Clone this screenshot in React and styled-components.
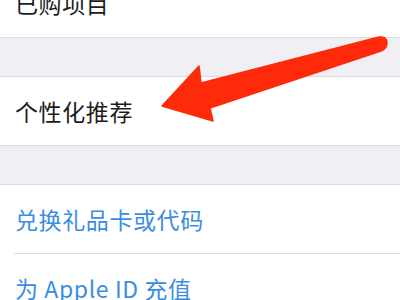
import React from "react";
import styled, { createGlobalStyle } from "styled-components";

const Global = createGlobalStyle`
  html, body { margin: 0; padding: 0; background: #efeff4; }
  body { width: 400px; height: 300px; overflow: hidden; }
`;

const Screen = styled.div`
  position: relative;
  width: 400px;
  height: 300px;
  overflow: hidden;
  background: #efeff4;
  font-family: "Noto Sans CJK SC", "Noto Sans", sans-serif;
`;

const List = styled.div`
  display: flex;
  flex-direction: column;
  margin-top: -31px;
`;

const Group = styled.div`
  background: #ffffff;
  border-top: 1px solid #dcdce1;
  border-bottom: 1px solid #dcdce1;
  &:first-child { border-top: none; }
`;

const Gap = styled.div`
  height: 38px;
`;

const Row = styled.div`
  height: 68px;
  display: flex;
  align-items: center;
  padding-left: 15px;
  font-size: 23px;
  letter-spacing: 0.6px;
  color: ${(p) => (p.$link ? "#3a8de2" : "#1c1c1c")};
  & + & {
    border-top: 1px solid #dcdce1;
    margin-left: 14px;
    padding-left: 1px;
  }
`;

const Arrow = styled.svg`
  position: absolute;
  left: 0;
  top: 0;
  pointer-events: none;
`;

export default function App() {
  return (
    <Screen>
      <Global />
      <List>
        <Group>
          <Row>已购项目</Row>
        </Group>
        <Gap />
        <Group>
          <Row>个性化推荐</Row>
        </Group>
        <Gap />
        <Group>
          <Row $link>兑换礼品卡或代码</Row>
          <Row $link>为 Apple ID 充值</Row>
        </Group>
      </List>
      <Arrow width="400" height="300" viewBox="0 0 400 300">
        <path
          d="M162 106 L199 66 L201 83 L379 37 Q387 36 387 43 Q387 49 381 51 L210 108 L213 121 Z"
          fill="#fe2a0a"
          stroke="#fe2a0a"
          strokeWidth="1.5"
          strokeLinejoin="round"
        />
      </Arrow>
    </Screen>
  );
}
